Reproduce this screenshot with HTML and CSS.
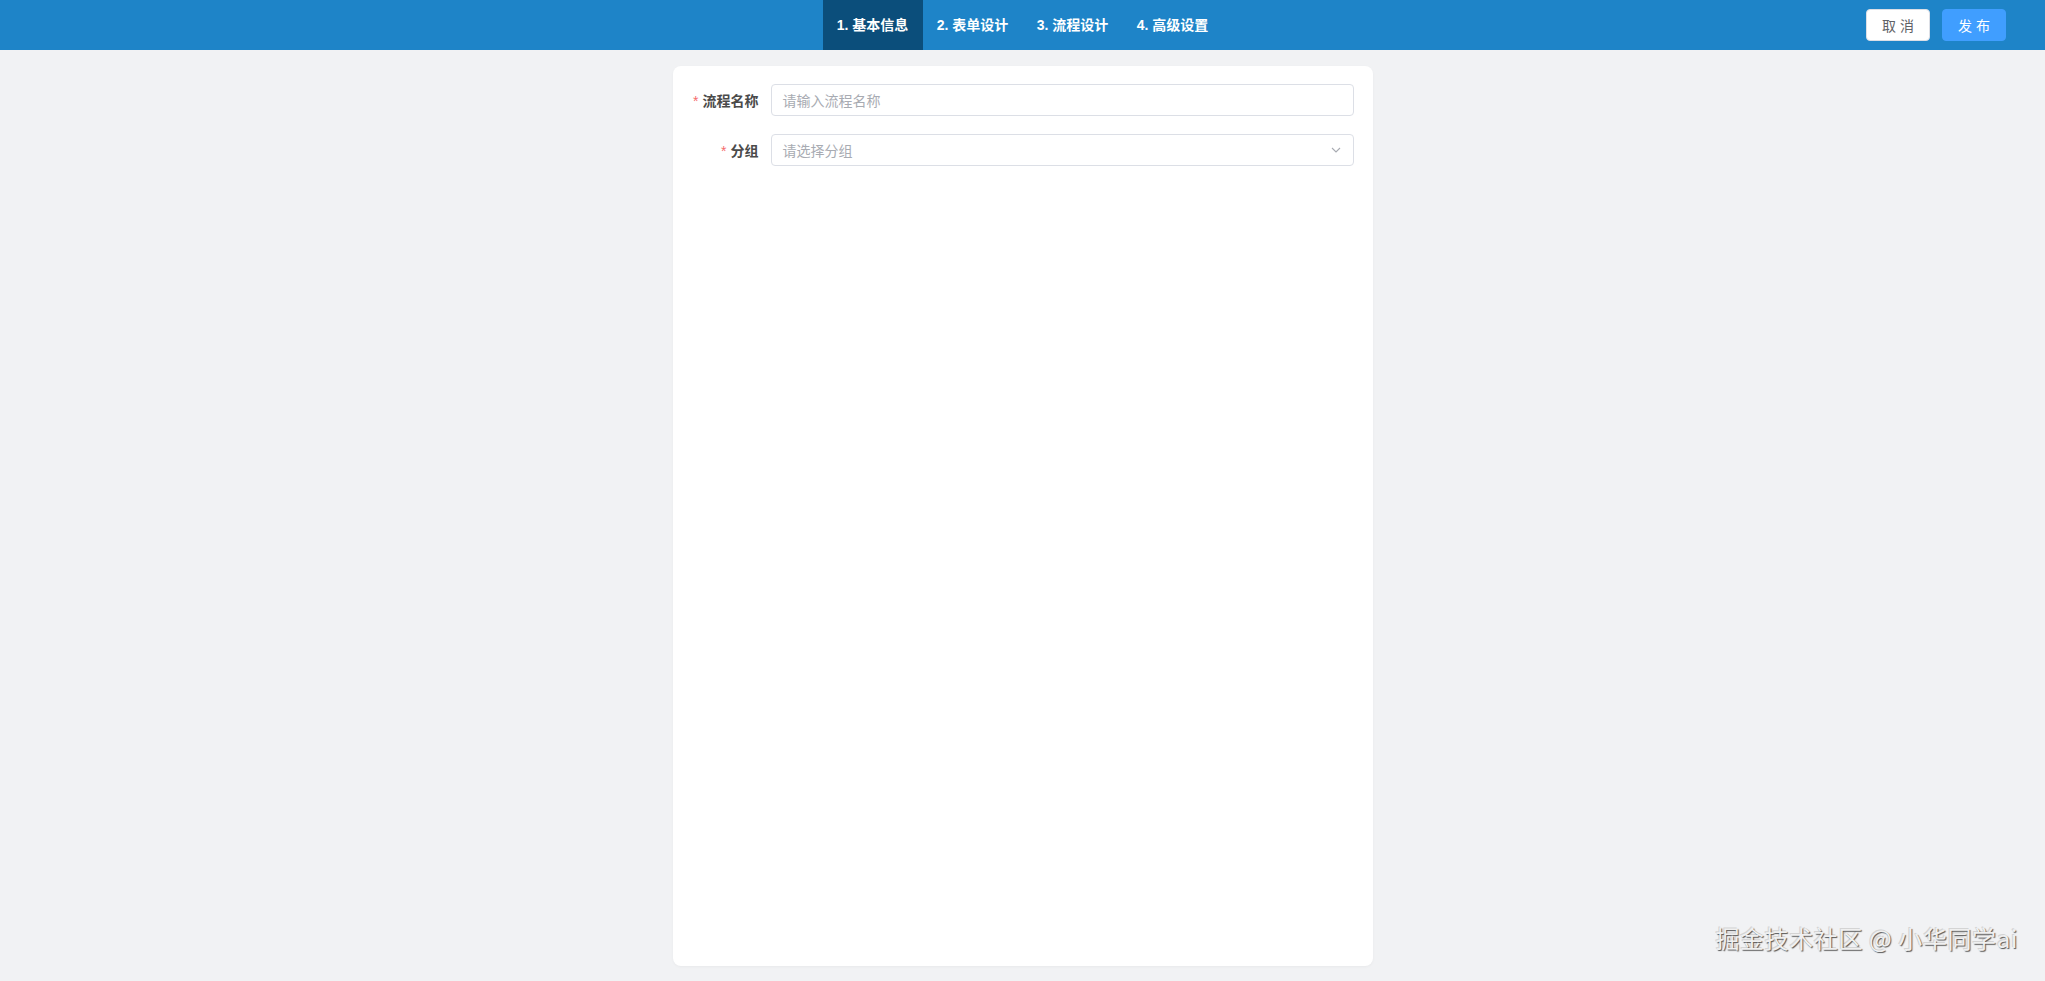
FILE: index.html
```html
<!DOCTYPE html>
<html lang="zh-CN">
<head>
<meta charset="utf-8">
<title>流程设计</title>
<link rel="stylesheet" href="styles.css">
</head>
<body>
<header class="topbar">
  <div class="topbar-side"></div>
  <nav class="steps">
    <div class="step active">1. 基本信息</div>
    <div class="step">2. 表单设计</div>
    <div class="step">3. 流程设计</div>
    <div class="step">4. 高级设置</div>
  </nav>
  <div class="topbar-side actions">
    <button class="btn btn-default">取 消</button>
    <button class="btn btn-primary">发 布</button>
  </div>
</header>
<main class="page">
  <section class="card">
    <div class="form-item">
      <label class="form-label"><span class="req">*</span>流程名称</label>
      <div class="input"><span class="placeholder">请输入流程名称</span></div>
    </div>
    <div class="form-item">
      <label class="form-label"><span class="req">*</span>分组</label>
      <div class="input select">
        <span class="placeholder">请选择分组</span>
        <svg class="arrow" width="14" height="14" viewBox="0 0 14 14"><polyline points="3,5 7,9 11,5" fill="none" stroke="#a8abb2" stroke-width="1.1"/></svg>
      </div>
    </div>
  </section>
</main>
<div class="watermark">掘金技术社区 @ 小华同学ai</div>
</body>
</html>
```
FILE: styles.css
```css
* { box-sizing: border-box; }
html, body { margin: 0; padding: 0; }
body {
  background: #f1f2f4;
  font-family: "Liberation Sans", "Noto Sans CJK SC", sans-serif;
  font-size: 14px;
  color: #303133;
  height: 981px;
  overflow: hidden;
}
.topbar {
  height: 50px;
  background: #1e84c8;
  display: grid;
  grid-template-columns: 1fr auto 1fr;
  align-items: center;
}
.steps { display: flex; height: 50px; }
.step {
  width: 100px;
  height: 50px;
  line-height: 50px;
  text-align: center;
  color: #fff;
  font-weight: bold;
  font-size: 14px;
}
.step.active { background: #0b4e7b; }
.actions {
  display: flex;
  justify-content: flex-end;
  gap: 12px;
  padding-right: 39px;
}
.btn {
  width: 64px;
  height: 32px;
  border-radius: 4px;
  font-family: inherit;
  font-size: 14px;
  cursor: pointer;
  padding: 0;
}
.btn-default { background: #fff; border: 1px solid #dcdfe6; color: #606266; }
.btn-primary { background: #409eff; border: 1px solid #409eff; color: #fff; }
.page { padding-top: 16px; display: flex; justify-content: center; }
.card {
  width: 700px;
  height: 900px;
  background: #fff;
  border-radius: 8px;
  padding: 18px 19px 0 20px;
  box-shadow: 0 1px 3px rgba(0,0,0,0.04);
}
.form-item { display: flex; align-items: center; margin-bottom: 18px; }
.form-label {
  width: 78px;
  padding-right: 12px;
  text-align: right;
  font-weight: bold;
  color: #4a4a4a;
  font-size: 14px;
}
.req { color: #f56c6c; margin-right: 4px; font-weight: normal; }
.input {
  flex: 1;
  height: 32px;
  border: 1px solid #dcdfe6;
  border-radius: 4px;
  padding: 0 11px;
  display: flex;
  align-items: center;
  justify-content: space-between;
}
.placeholder { color: #a8abb2; font-size: 14px; }
.arrow { margin-right: -1px; }
.watermark {
  position: absolute;
  right: 27px;
  bottom: 26px;
  font-size: 24px;
  letter-spacing: 0.6px;
  color: #f0f0f0;
  text-shadow: 1px 1px 1px #555, -1px -1px 0 #d4d4d4;
  font-family: "Noto Sans CJK SC", sans-serif;
  white-space: nowrap;
}
```
